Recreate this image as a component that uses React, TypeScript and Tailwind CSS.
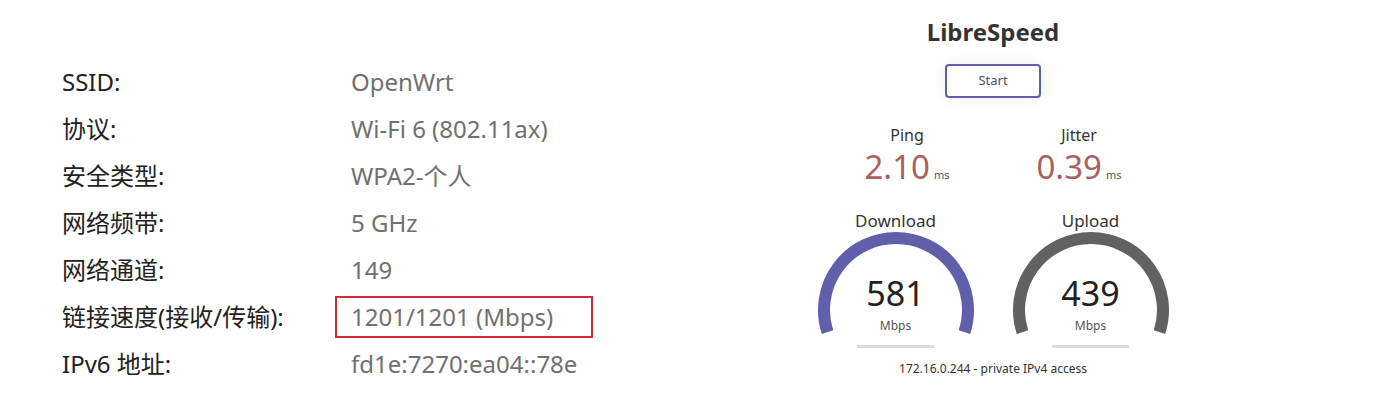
const font = { fontFamily: '"Noto Sans", "Noto Sans CJK SC", sans-serif' }

const rows: { label: string; value: string; boxed?: boolean }[] = [
  { label: 'SSID:', value: 'OpenWrt' },
  { label: '协议:', value: 'Wi-Fi 6 (802.11ax)' },
  { label: '安全类型:', value: 'WPA2-个人' },
  { label: '网络频带:', value: '5 GHz' },
  { label: '网络通道:', value: '149' },
  { label: '链接速度(接收/传输):', value: '1201/1201 (Mbps)', boxed: true },
  { label: 'IPv6 地址:', value: 'fd1e:7270:ea04::78e' },
]

// arc from 198deg to -18deg, r=72, centre (85,79)
const Gauge = ({ title, value, color }: { title: string; value: string; color: string }) => (
  <div className="flex w-[170px] flex-col items-center">
    <div className="h-[20px] text-[17px] leading-[20px] text-[#333]">{title}</div>
    <div className="relative h-[108px] w-[170px]">
      <svg width="170" height="108" viewBox="0 0 170 108" className="absolute inset-0">
        <path
          d="M 16.5 101.2 A 72 72 0 1 1 153.5 101.2"
          fill="none"
          stroke={color}
          strokeWidth="12"
        />
      </svg>
      <div className="absolute inset-x-0 top-[42px] text-center text-[34px] leading-[40px] text-[#222]">
        {value}
      </div>
      <div className="absolute inset-x-0 top-[87px] text-center text-[12px] leading-[16px] text-[#555]">
        Mbps
      </div>
    </div>
    <div className="mt-[6px] h-[3px] w-[77px] bg-[#dcdcdc]" />
  </div>
)

const Metric = ({ title, value }: { title: string; value: string }) => (
  <div className="flex w-[150px] flex-col items-center">
    <div className="h-[20px] text-[16px] leading-[20px] text-[#333]">{title}</div>
    <div className="mt-[5px] flex h-[34px] items-baseline">
      <span className="text-[33px] leading-[34px] text-[#AA6060]">{value}</span>
      <span className="ml-[4px] text-[11px] leading-none text-[#555]">ms</span>
    </div>
  </div>
)

export default function App() {
  return (
    <div className="flex h-[414px] w-[1386px] bg-white" style={font}>
      {/* Wi-Fi properties */}
      <div className="w-[793px] pl-[62px] pt-[58px]">
        {rows.map(r => (
          <div key={r.label} className="flex h-[47px] items-center text-[24px] leading-[32px]">
            <div className="w-[289px] text-[#222]">{r.label}</div>
            {r.boxed ? (
              <div className="-ml-[16px] flex h-[42px] w-[258px] items-center border-2 border-[#d42a35] pl-[14px] text-[#707070]">
                {r.value}
              </div>
            ) : (
              <div className="text-[#707070]">{r.value}</div>
            )}
          </div>
        ))}
      </div>

      {/* LibreSpeed panel */}
      <div className="flex w-[400px] flex-col items-center">
        <div className="mt-[16px] text-[24px] font-bold leading-[32px] text-[#333]">LibreSpeed</div>
        <button className="mt-[16px] h-[34px] w-[96px] rounded-[4px] border-2 border-[#6060AA] bg-white text-[13px] text-[#505070] shadow-[0_0_14px_rgba(0,0,0,0.08)]">
          Start
        </button>
        <div className="mt-[27px] flex gap-[22px]">
          <Metric title="Ping" value="2.10" />
          <Metric title="Jitter" value="0.39" />
        </div>
        <div className="mt-[27px] flex gap-[25px]">
          <Gauge title="Download" value="581" color="#6060AA" />
          <Gauge title="Upload" value="439" color="#616161" />
        </div>
        <div className="mt-[13px] text-[12px] leading-[16px] text-[#333]">
          172.16.0.244 - private IPv4 access
        </div>
      </div>
    </div>
  )
}
